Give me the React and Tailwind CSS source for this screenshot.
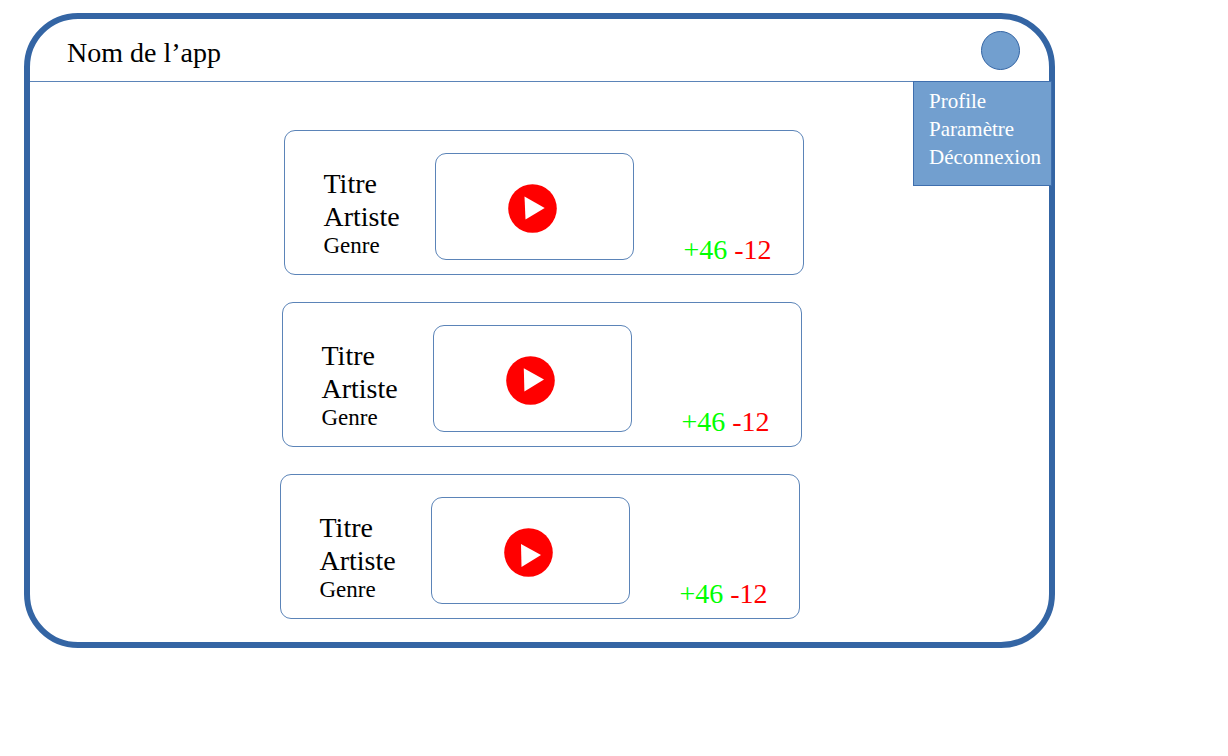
const tracks = [
  { id: 1, inset: 'pl-2', triangle: '16.5,12.5 36.7,24 17.5,35.5' },
  { id: 2, inset: 'pl-1', triangle: '17.8,12.3 38,23.5 18.4,35.5' },
  { id: 3, inset: 'pl-0', triangle: '17,16 37,27 17.5,39' },
];

function TrackCard({ track }) {
  return (
    <li className={`flex justify-center ${track.inset}`}>
      <article className="flex w-full max-w-[520px] items-start rounded-[11px] border border-[#5b84b8] pt-[22px] pb-2 pl-[39px] pr-[31px]">
        <div className="w-[111px] shrink-0 pt-[14px] text-[28px] leading-[33px]">
          <h2>Titre</h2>
          <p>Artiste</p>
          <p className="text-[23px] leading-[26px]">Genre</p>
        </div>
        <div className="mb-[6px] flex h-[107px] w-[199px] shrink-0 items-center justify-center rounded-[11px] border border-[#5b84b8] pt-[3px] pr-1">
          <button type="button" aria-label="Lecture" className="cursor-pointer rounded-full">
            <svg viewBox="0 0 49 49" className="block size-[49px]" aria-hidden="true">
              <circle cx="24.5" cy="24.5" r="24.3" fill="#ff0000" />
              <polygon points={track.triangle} fill="#ffffff" />
            </svg>
          </button>
        </div>
        <p className="flex grow justify-end gap-[7px] self-end text-[28px] leading-[33px]">
          <span className="text-[#00ff00]">+46</span>
          <span className="text-[#ff0000]">-12</span>
        </p>
      </article>
    </li>
  );
}

export default function App() {
  return (
    <div className="bg-white pt-[13px] pb-6 pl-6 pr-[173px] font-['Liberation_Serif','Times_New_Roman',serif] text-black">
      <div className="rounded-[54px] border-[6px] border-[#3465a4]">
        <header className="relative flex h-[63px] items-center justify-between border-b border-[#5b84b8] pl-[37px] pr-[29px]">
          <h1 className="pt-1 text-[28px] leading-[33px]">Nom de l’app</h1>
          <button
            type="button"
            aria-label="Menu du compte"
            className="size-[39px] cursor-pointer rounded-full border border-[#3465a4] bg-[#729fcf]"
          />
          <nav className="absolute top-full -right-[3px] w-[139px] border border-[#3f6fae] bg-[#729fcf] pt-[5px] pb-[14px] pl-[15px] text-[21px] leading-7 text-white">
            <a href="#profile" className="block">Profile</a>
            <a href="#parametre" className="block">Paramètre</a>
            <a href="#deconnexion" className="block">Déconnexion</a>
          </nav>
        </header>
        <main className="pt-12 pb-[23px]">
          <ul className="flex flex-col gap-[27px]">
            {tracks.map((track) => (
              <TrackCard key={track.id} track={track} />
            ))}
          </ul>
        </main>
      </div>
    </div>
  );
}
